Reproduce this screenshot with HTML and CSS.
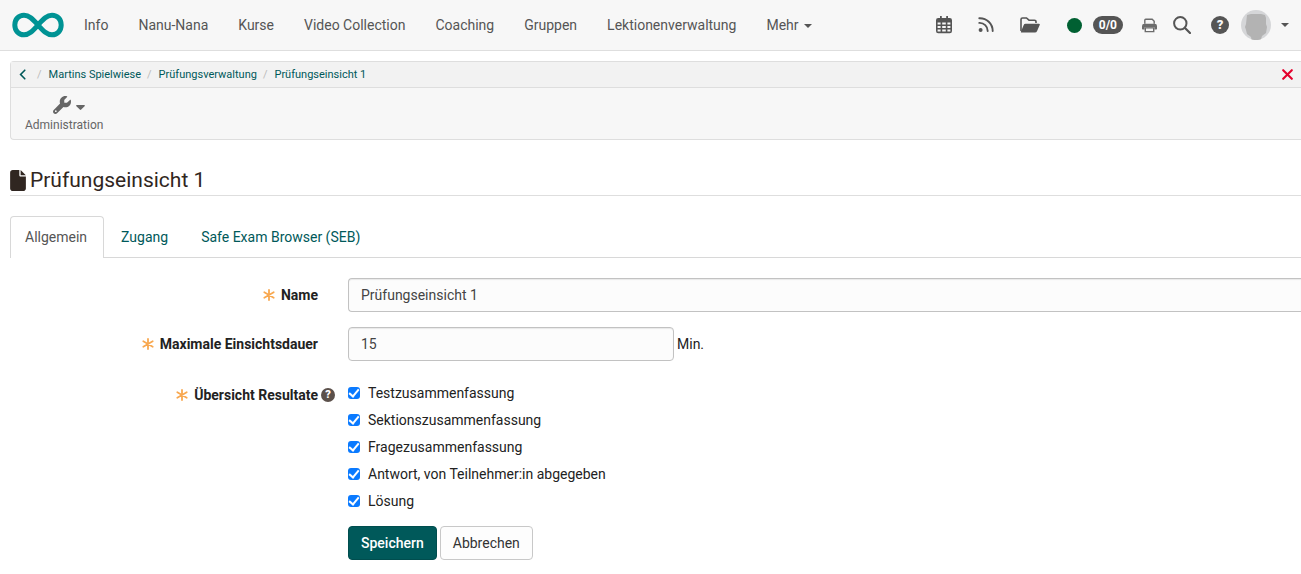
FILE: index.html
```html
<!DOCTYPE html>
<html lang="de">
<head>
<meta charset="utf-8">
<title>Prüfungseinsicht 1</title>
<link rel="stylesheet" href="styles.css">
</head>
<body>
<svg class="sprite" aria-hidden="true">
  <symbol id="star" viewBox="0 0 12 12"><path d="M6 .9v10.200M1.300 3.300l9.400 5.400M10.700 3.300L1.300 8.700" fill="none" stroke="currentColor" stroke-width="1.800" stroke-linecap="round"/></symbol>
</svg>
<header class="navbar">
  <a class="logo" href="#" aria-label="Startseite">
    <svg viewBox="0 0 52 26"><path d="M26 13C21 7.500 17.500 3.200 12 3.200C6.500 3.200 2.800 7.500 2.800 13S6.500 22.800 12 22.800C17.500 22.800 21 18.500 26 13S34.500 3.200 40 3.200S49.200 7.500 49.200 13S45.500 22.800 40 22.800S31 18.500 26 13Z" fill="none" stroke="currentColor" stroke-width="5"/></svg>
  </a>
  <nav class="sites">
    <a href="#">Info</a>
    <a href="#">Nanu-Nana</a>
    <a href="#">Kurse</a>
    <a href="#">Video Collection</a>
    <a href="#">Coaching</a>
    <a href="#">Gruppen</a>
    <a href="#">Lektionenverwaltung</a>
    <a href="#">Mehr <i class="caret"></i></a>
  </nav>
  <div class="tools">
    <div class="tool-set">
      <a href="#" aria-label="Kalender"><svg class="icon-md" viewBox="0 0 16 18"><path fill="currentColor" fill-rule="evenodd" d="M4 .5a.9.900 0 0 1 1.800 0V2h4.400V.5a.9.900 0 0 1 1.800 0V2h1.800A2.200 2.200 0 0 1 16 4.200V15a2.200 2.200 0 0 1-2.200 2.200H2.200A2.200 2.200 0 0 1 0 15V4.200A2.200 2.200 0 0 1 2.200 2H4zM1.600 6.600v2h3v-2zM6.200 6.600v2h3.600v-2zM11.400 6.600v2h3v-2zM1.600 10v2h3v-2zM6.200 10v2h3.600v-2zM11.400 10v2h3v-2zM1.600 13.400v2.200h3v-2.200zM6.200 13.400v2.200h3.600v-2.200zM11.400 13.400v2.200h3v-2.200z"/></svg></a>
      <a href="#" aria-label="RSS"><svg class="icon-md" viewBox="0 0 16 18"><circle cx="2.600" cy="14" r="2" fill="currentColor"/><path d="M1.300 6.900A8 8 0 0 1 9.700 15M1.300 2.200A12.800 12.800 0 0 1 14.700 15" fill="none" stroke="currentColor" stroke-width="1.900" stroke-linecap="round"/></svg></a>
      <a href="#" aria-label="Ordner"><svg class="icon-folder" viewBox="0 0 20 16"><path d="M1 14V2.500A1.500 1.500 0 0 1 2.500 1h4L9 3.200h5.500A1.500 1.500 0 0 1 16 4.700V6" fill="none" stroke="currentColor" stroke-width="1.600"/><path fill="currentColor" d="M5.600 6.800h13.300q1.300 0 .8 1.200l-2.600 6q-.6 1.600-2.200 1.600H1.800q-1.300 0-.8-1.200L3.600 8.200q.5-1.400 2-1.400z"/></svg></a>
    </div>
    <div class="chat"><span class="status"></span><span class="badge">0/0</span></div>
    <div class="tool-set search-set">
      <a class="print" href="#" aria-label="Drucken"><svg class="icon-print" viewBox="0 0 16 16"><path fill="none" stroke="currentColor" stroke-width="1.500" d="M3 6V2.300q0-.9.900-.9h7l2.100 2V6M3.500 10.500h9v4h-9z"/><path fill="currentColor" fill-rule="evenodd" d="M2.600 6h10.800A2.600 2.600 0 0 1 16 8.600v2.800q0 .8-.8.800h-1.900V9.800H2.700v2.400H.8q-.8 0-.8-.8V8.600A2.600 2.600 0 0 1 2.600 6z"/></svg></a>
      <a href="#" aria-label="Suche"><svg class="icon-lg" viewBox="0 0 18 18"><path d="M12 12l5 5" stroke="currentColor" stroke-width="2.200" stroke-linecap="round"/><circle cx="7.300" cy="7.300" r="6.200" fill="none" stroke="currentColor" stroke-width="2"/></svg></a>
    </div>
    <a class="help help-lg" href="#" aria-label="Hilfe">?</a>
    <a class="user" href="#" aria-label="Benutzermenü">
      <svg class="avatar" viewBox="0 0 30 30"><circle cx="15" cy="15" r="15" fill="#d5d6d8"/><path fill="#b3b3b3" d="M6 5l4-1h10l4 1 1 3v6l1 3-1 6-4 3-1 3.200a15 15 0 0 1-9.500.2L10 27 6 24 5 20l-1-3 1-3z"/></svg>
      <i class="caret"></i>
    </a>
  </div>
</header>
<main class="main">
  <section class="toolbar">
    <div class="crumb-row">
      <ol class="crumbs">
        <li><a href="#" aria-label="Zurück"><svg class="back" viewBox="0 0 7 11"><path d="M5.800 1.200L1.600 5.500l4.200 4.300" fill="none" stroke="currentColor" stroke-width="1.600" stroke-linecap="round"/></svg></a></li>
        <li><a href="#">Martins Spielwiese</a></li>
        <li><a href="#">Prüfungsverwaltung</a></li>
        <li><a href="#">Prüfungseinsicht 1</a></li>
      </ol>
      <button class="close" type="button" aria-label="Schliessen"><svg viewBox="0 0 11 11"><path d="M1.200 1.200l8.600 8.600M9.800 1.200L1.200 9.800" stroke="currentColor" stroke-width="2.100" stroke-linecap="round"/></svg></button>
    </div>
    <button class="admin" type="button">
      <span class="admin-icons"><svg class="wrench" viewBox="0 0 512 512"><path fill="currentColor" fill-rule="evenodd" d="M352 320c88.400 0 160-71.600 160-160c0-15.300-2.200-30.100-6.200-44.200c-3.100-10.800-16.400-13.200-24.300-5.300l-76.800 76.800c-3 3-7.100 4.700-11.300 4.700H336c-8.800 0-16-7.200-16-16V118.600c0-4.200 1.700-8.300 4.700-11.300l76.800-76.800c7.900-7.900 5.400-21.200-5.300-24.300C382.100 2.200 367.300 0 352 0C263.600 0 192 71.600 192 160c0 19.100 3.400 37.500 9.500 54.500L19.900 396.100C7.200 408.800 0 426.100 0 444.100C0 481.600 30.400 512 67.900 512c18 0 35.300-7.200 48-19.900L297.500 310.500c17 6.200 35.400 9.500 54.500 9.500zM80 408a24 24 0 1 1 0 48 24 24 0 1 1 0-48z"/></svg><svg class="drop" viewBox="0 0 9 5"><path fill="currentColor" d="M.8 0h7.400q1.200.2.400 1.200L5.200 4.600q-.7.700-1.400 0L.4 1.200Q-.4.200.8 0z"/></svg></span>
      <span>Administration</span>
    </button>
  </section>
  <h1 class="title"><svg viewBox="0 0 384 512"><path fill="currentColor" d="M0 64C0 28.700 28.700 0 64 0H224V128c0 17.700 14.300 32 32 32H384V448c0 35.300-28.700 64-64 64H64c-35.300 0-64-28.700-64-64V64zm384 64H256V0L384 128z"/></svg>Prüfungseinsicht 1</h1>
  <nav class="tabs">
    <a class="tab active" href="#">Allgemein</a>
    <a class="tab" href="#">Zugang</a>
    <a class="tab" href="#">Safe Exam Browser (SEB)</a>
  </nav>
  <form class="form">
    <label class="label" for="name"><svg class="star"><use href="#star"/></svg>Name</label>
    <div><input class="field open-end" id="name" type="text" value="Prüfungseinsicht 1"></div>
    <label class="label" for="duration"><svg class="star"><use href="#star"/></svg>Maximale Einsichtsdauer</label>
    <div class="with-unit"><input class="field short" id="duration" type="text" value="15"><span>Min.</span></div>
    <div class="label results" id="results"><svg class="star"><use href="#star"/></svg>Übersicht Resultate<span class="help help-sm">?</span></div>
    <div class="checks" role="group" aria-labelledby="results">
      <label><input type="checkbox" checked>Testzusammenfassung</label>
      <label><input type="checkbox" checked>Sektionszusammenfassung</label>
      <label><input type="checkbox" checked>Fragezusammenfassung</label>
      <label><input type="checkbox" checked>Antwort, von Teilnehmer:in abgegeben</label>
      <label><input type="checkbox" checked>Lösung</label>
    </div>
    <div class="actions">
      <button class="btn primary" type="submit">Speichern</button>
      <button class="btn" type="button">Abbrechen</button>
    </div>
  </form>
</main>
</body>
</html>
```
FILE: styles.css
```css
* { box-sizing: border-box; }
body {
  margin: 0;
  background: #fff;
  color: #222;
  font: 14px/20px Roboto, "Liberation Sans", sans-serif;
}
a { color: #00595a; text-decoration: none; }
svg { display: block; flex: none; }
button, input { font: inherit; }
.sprite { display: none; }

.navbar {
  display: flex;
  align-items: center;
  height: 51px;
  padding: 0 12px;
  background: #f7f7f7;
  border-bottom: 1px solid #dedede;
}
.navbar a { color: #555; }
.navbar .logo { color: #009394; }
.logo svg { width: 52px; height: 26px; }
.sites { display: flex; gap: 30px; margin-left: 20px; white-space: nowrap; }
.caret {
  display: inline-block;
  margin-left: 2px;
  vertical-align: middle;
  border: 4px solid transparent;
  border-top-color: currentColor;
  border-bottom: 0;
}
.tools, .tool-set, .chat, .user { display: flex; align-items: center; }
.tools { margin-left: auto; }
.tool-set { gap: 26px; }
.icon-md { width: 16px; height: 18px; }
.icon-folder { width: 20px; height: 16px; }
.icon-print { width: 15px; height: 15px; }
.navbar .print { color: #6c6c6c; }
.icon-lg { width: 18px; height: 18px; }
.chat { gap: 11px; margin: 0 19px 0 27px; }
.status { width: 15px; height: 15px; border-radius: 50%; background: #006032; }
.badge {
  padding: 0 6px;
  border-radius: 9px;
  background: #555;
  color: #fff;
  font-size: 12px;
  font-weight: 700;
  line-height: 18px;
}
.search-set { gap: 16px; }
.help {
  display: grid;
  place-items: center;
  border-radius: 50%;
  font-weight: 900;
}
.navbar .help-lg { width: 18px; height: 18px; margin: 0 12px 0 20px; background: #555; color: #f7f7f7; font-size: 13px; line-height: 18px; }
.avatar { width: 30px; height: 30px; margin-right: 8px; }

.main { padding: 10px 0 14px 10px; }
.toolbar {
  border: 1px solid #dedede;
  border-right: 0;
  border-radius: 4px 0 0 4px;
  background: #f7f7f7;
}
.crumb-row {
  display: flex;
  align-items: center;
  justify-content: space-between;
  height: 26px;
  padding: 0 8px;
  background: #f2f2f2;
  border-bottom: 1px solid #dedede;
}
.crumbs { display: flex; align-items: center; margin: 0; padding: 0; list-style: none; font-size: 11px; }
.crumbs li { display: flex; align-items: center; }
.crumbs li + li::before { content: "/"; padding: 0 7px 0 6px; color: #bbb; }
.back { width: 7px; height: 11px; margin-right: 5px; }
.close { padding: 0; border: 0; background: none; color: #e4002c; }
.close svg { width: 11px; height: 11px; }
.admin {
  display: flex;
  flex-direction: column;
  align-items: center;
  gap: 2px;
  padding: 8px 14px 4px;
  border: 0;
  background: none;
  color: #666;
  font-size: 12px;
  line-height: 19px;
}
.admin-icons { display: flex; align-items: center; gap: 5px; padding-left: 10px; }
.wrench { width: 18px; height: 18px; }
.drop { width: 9px; height: 5px; margin-top: 4px; }

.title {
  display: flex;
  align-items: center;
  gap: 4px;
  margin: 25px 0 20px;
  border-bottom: 1px solid #dedede;
  color: #302621;
  font-size: 21px;
  font-weight: 400;
  line-height: 30px;
}
.title svg { width: 16px; height: 21px; }

.tabs { display: flex; gap: 2px; border-bottom: 1px solid #d8d8d8; }
.tab { padding: 10px 15px 10px 14px; border: 1px solid transparent; border-bottom: 0; border-radius: 4px 4px 0 0; }
.tab.active { margin-bottom: -1px; padding: 10px 16px 11px 14px; border-color: #d8d8d8; background: #fff; color: #555; }

.form {
  display: grid;
  grid-template-columns: minmax(0, 308fr) minmax(0, 953fr);
  gap: 15px 30px;
  padding-top: 20px;
}
.label { display: flex; align-items: center; justify-content: flex-end; gap: 6px; font-weight: 700; }
.star { width: 12px; height: 12px; color: #f8a850; }
.results { align-self: start; margin-right: -17px; padding-top: 9px; }
.help-sm { width: 14px; height: 14px; margin-left: -3px; background: #5b504b; color: #fff; font-size: 11px; line-height: 14px; }
.field {
  display: block;
  width: 100%;
  height: 34px;
  padding: 6px 12px;
  border: 1px solid #c2c2c2;
  border-radius: 4px;
  background: #fcfcfc;
  box-shadow: inset 0 1px 1px rgba(0, 0, 0, .08);
  color: #444;
}
.open-end { border-right: 0; border-radius: 4px 0 0 4px; }
.short { width: 326px; max-width: 90%; }
.with-unit { display: flex; align-items: center; gap: 3px; }
.checks { display: grid; gap: 7px; padding-top: 7px; }
.checks label { display: flex; align-items: center; gap: 8px; }
.checks input {
  display: grid;
  place-items: center;
  appearance: none;
  width: 12px;
  height: 12px;
  margin: 0;
  border-radius: 3px;
  background: #0a7aff;
}
.checks input:checked::after {
  content: "";
  width: 4px;
  height: 8px;
  margin-bottom: 2px;
  border: solid #fff;
  border-width: 0 2px 2px 0;
  transform: rotate(40deg);
}
.actions { display: flex; grid-column: 2; gap: 3px; }
.btn {
  height: 34px;
  padding: 6px 12px;
  border: 1px solid #c8c8c8;
  border-radius: 4px;
  background: #fdfdfd;
  color: #333;
}
.primary { border-color: #004d4e; background: #00595a; color: #fff; font-weight: 500; }
```
